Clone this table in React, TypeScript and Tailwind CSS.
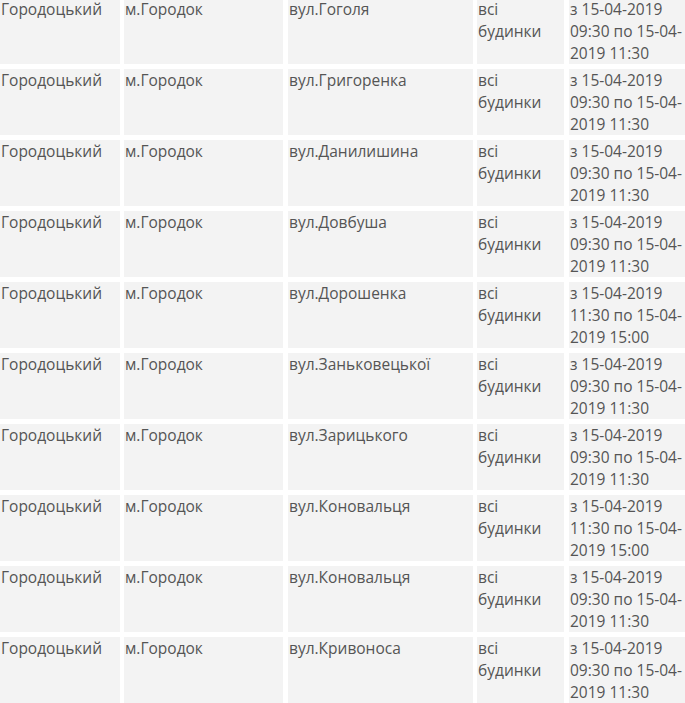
import React from "react";

const rows: { street: string; from: string; to: string }[] = [
  { street: "вул.Гоголя", from: "09:30", to: "11:30" },
  { street: "вул.Григоренка", from: "09:30", to: "11:30" },
  { street: "вул.Данилишина", from: "09:30", to: "11:30" },
  { street: "вул.Довбуша", from: "09:30", to: "11:30" },
  { street: "вул.Дорошенка", from: "11:30", to: "15:00" },
  { street: "вул.Заньковецької", from: "09:30", to: "11:30" },
  { street: "вул.Зарицького", from: "09:30", to: "11:30" },
  { street: "вул.Коновальця", from: "11:30", to: "15:00" },
  { street: "вул.Коновальця", from: "09:30", to: "11:30" },
  { street: "вул.Кривоноса", from: "09:30", to: "11:30" },
];

export default function App() {
  return (
    <div
      className="w-[685px] h-[703px] overflow-hidden bg-white text-[15.5px] leading-[22px] text-[#555555]"
      style={{ fontFamily: '"Open Sans", "Liberation Sans", sans-serif' }}
    >
      <div className="-mt-[2px] flex flex-col gap-[5px]">
        {rows.map((r, i) => (
          <div key={i} className="flex h-[66px]">
            <div className="w-[120px] bg-[#f3f3f3] pl-[1px]">Городоцький</div>
            <div className="ml-[4px] w-[159px] bg-[#f3f3f3] pl-[1px]">м.Городок</div>
            <div className="ml-[5px] w-[185px] bg-[#f3f3f3] pl-[1px]">{r.street}</div>
            <div className="ml-[4px] w-[87px] bg-[#f3f3f3] pl-[1px]">
              <div>всі</div>
              <div>будинки</div>
            </div>
            <div className="ml-[5px] w-[116px] bg-[#f3f3f3] pl-[1px] whitespace-nowrap">
              <div>з 15-04-2019</div>
              <div>{r.from} по 15-04-</div>
              <div>2019 {r.to}</div>
            </div>
          </div>
        ))}
      </div>
    </div>
  );
}
